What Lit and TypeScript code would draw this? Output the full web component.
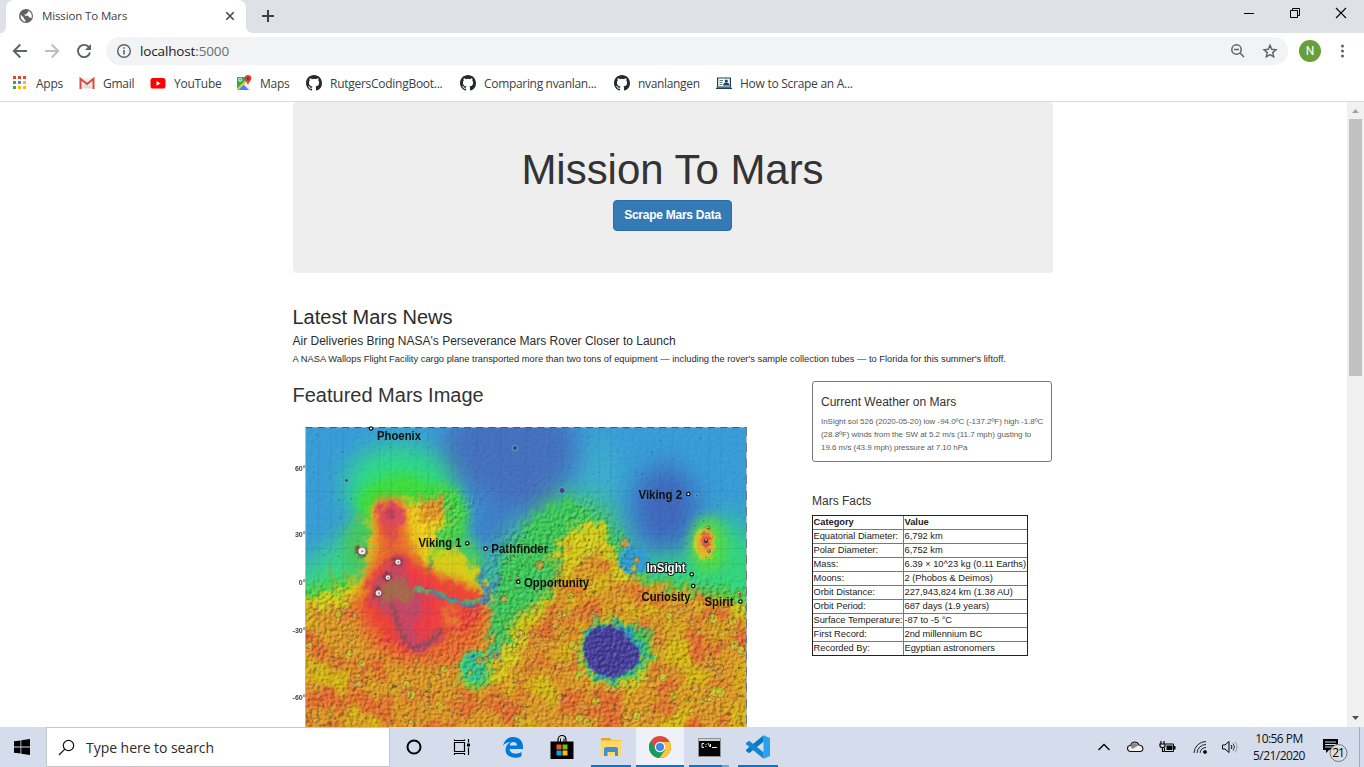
import { LitElement, html, css, svg } from "lit";
import { customElement } from "lit/decorators.js";

const facts: [string, string][] = [
  ["Equatorial Diameter:", "6,792 km"],
  ["Polar Diameter:", "6,752 km"],
  ["Mass:", "6.39 × 10^23 kg (0.11 Earths)"],
  ["Moons:", "2 (Phobos & Deimos)"],
  ["Orbit Distance:", "227,943,824 km (1.38 AU)"],
  ["Orbit Period:", "687 days (1.9 years)"],
  ["Surface Temperature:", "-87 to -5 °C"],
  ["First Record:", "2nd millennium BC"],
  ["Recorded By:", "Egyptian astronomers"],
];

@customElement("mars-map")
class MarsMap extends LitElement {
  static styles = css`
    :host { display: block; width: 468px; height: 315px; }
    svg { display: block; isolation: isolate; }
    .label { font: bold 13.4px "Liberation Sans", Arial, sans-serif; fill: #111; }
    .deg { font: bold 7px "Liberation Sans", Arial, sans-serif; fill: #444; text-anchor: end; }
    .halo { fill: #fff; stroke: #111; stroke-width: 2px; paint-order: stroke; }
    .shade { mix-blend-mode: hard-light; }
  `;

  // Seeded generator keeps the crater field identical on every render.
  craters() {
    let s = 7919;
    const rnd = () => (s = (s * 16807) % 2147483647) / 2147483647;
    const out = [];
    for (let i = 0; i < 900; i++) {
      const x = 306 + rnd() * 440;
      const y = 540 + rnd() * 187;
      const r = 0.5 + Math.pow(rnd(), 6) * 4.5;
      const k = rnd();
      if (y < 655 && x > 355 && x < 490) continue;
      if (y < 605 && (x < 355 || x > 640)) continue;
      if (Math.hypot(x - 612, y - 651) < 34) continue;
      out.push(svg`<circle cx=${x} cy=${y} r=${r} fill=${r > 1.7 ? (k > 0.5 ? "#c9d02c" : "#e39a30") : "#7d4a18"} fill-opacity=${r > 1.7 ? 0.7 : 0.45} stroke="#5f4319" stroke-opacity=".7" stroke-width=".6"></circle>
        <path d="M${x - r} ${y + r * 0.4}A${r} ${r} 0 0 0 ${x + r} ${y + r * 0.2}" fill="none" stroke="#f4e39a" stroke-opacity=".6" stroke-width=".5"></path>`);
    }
    for (let i = 0; i < 110; i++) {
      const x = 306 + rnd() * 440;
      const y = 430 + rnd() * 130;
      out.push(svg`<circle cx=${x} cy=${y} r=${0.4 + rnd() * 0.5} fill="#234f78" fill-opacity=".5"></circle>`);
    }
    return out;
  }

  render() {
    const peaks: [number, number, number][] = [[362, 551, 3.6], [398, 562, 2.6], [388, 577.5, 2.3], [378.5, 593, 2.8]];
    const sites: [number, number][] = [[371, 428.5], [467.3, 543.3], [485.5, 548.7], [518.3, 581.8], [688.3, 494], [691.7, 574.3], [693.2, 586], [740.5, 601.5]];
    return html`<svg width="468" height="315" viewBox="292 412 468 315">
      <defs>
        <clipPath id="frame"><rect x="305.5" y="427.5" width="441" height="300"></rect></clipPath>
        <filter id="soft" x="-30%" y="-30%" width="160%" height="160%" color-interpolation-filters="sRGB"><feGaussianBlur stdDeviation="12"></feGaussianBlur></filter>
        <filter id="mid" x="-30%" y="-30%" width="160%" height="160%" color-interpolation-filters="sRGB"><feGaussianBlur stdDeviation="6"></feGaussianBlur></filter>
        <filter id="rough" filterUnits="userSpaceOnUse" x="296" y="420" width="460" height="320" color-interpolation-filters="sRGB">
          <feGaussianBlur stdDeviation="3" result="b"></feGaussianBlur>
          <feTurbulence type="fractalNoise" baseFrequency=".11" numOctaves="4" seed="4" result="n"></feTurbulence>
          <feDisplacementMap in="b" in2="n" scale="22" xChannelSelector="R" yChannelSelector="G"></feDisplacementMap>
        </filter>
        <filter id="craggy" filterUnits="userSpaceOnUse" x="296" y="420" width="460" height="320" color-interpolation-filters="sRGB">
          <feGaussianBlur stdDeviation="1" result="b"></feGaussianBlur>
          <feTurbulence type="fractalNoise" baseFrequency=".2" numOctaves="3" seed="9" result="n"></feTurbulence>
          <feDisplacementMap in="b" in2="n" scale="8" xChannelSelector="R" yChannelSelector="G"></feDisplacementMap>
        </filter>
        <filter id="redpatch" filterUnits="userSpaceOnUse" x="305" y="427" width="442" height="300" color-interpolation-filters="sRGB">
          <feTurbulence type="fractalNoise" baseFrequency=".032" numOctaves="5" seed="12"></feTurbulence>
          <feColorMatrix values="0 0 0 0 .91  0 0 0 0 .36  0 0 0 0 .2  4.5 0 0 0 -2.1"></feColorMatrix>
        </filter>
        <filter id="yellowpatch" filterUnits="userSpaceOnUse" x="305" y="427" width="442" height="300" color-interpolation-filters="sRGB">
          <feTurbulence type="fractalNoise" baseFrequency=".03" numOctaves="5" seed="31"></feTurbulence>
          <feColorMatrix values="0 0 0 0 .84  0 0 0 0 .77  0 0 0 0 .06  0 4.5 0 0 -2.2"></feColorMatrix>
        </filter>
        <filter id="relief" filterUnits="userSpaceOnUse" x="305" y="427" width="442" height="300" color-interpolation-filters="sRGB">
          <feTurbulence type="fractalNoise" baseFrequency=".27" numOctaves="3" seed="3"></feTurbulence>
          <feColorMatrix values="0 0 0 0 0 0 0 0 0 0 0 0 0 0 0 1 0 0 0 0"></feColorMatrix>
          <feDiffuseLighting surfaceScale="1.900" diffuseConstant=".72" lighting-color="#fff"><feDistantLight azimuth="225" elevation="43"></feDistantLight></feDiffuseLighting>
        </filter>
        <mask id="south">
          <path filter="url(#mid)" fill="#fff" d="M290 608 L350 600 L365 640 L430 670 L480 690 L510 625 L550 590 L580 530 L600 545 L630 585 L690 590 L760 606 V745 H290Z"></path>
        </mask>
        <mask id="rugged">
          <rect x="300" y="420" width="450" height="310" fill="#fff" fill-opacity=".06"></rect>
          <path filter="url(#mid)" fill="#fff" fill-opacity=".38" d="M290 590 L350 580 L365 630 L430 655 L478 600 L490 545 L530 520 L590 495 L625 535 L640 580 L700 580 L760 590 V745 H290Z M405 510 L440 490 L478 500 L450 540 L430 540Z"></path>
        </mask>
      </defs>
      <g clip-path="url(#frame)">
        <rect x="305" y="427" width="442" height="301" fill="#389dd8"></rect>
        <g filter="url(#soft)">
          <ellipse cx="510" cy="450" rx="68" ry="50" fill="#4570bf"></ellipse>
          <ellipse cx="525" cy="490" rx="32" ry="25" fill="#4570bf"></ellipse>
          <ellipse cx="665" cy="508" rx="32" ry="42" fill="#3f68bd"></ellipse>
          <ellipse cx="490" cy="525" rx="18" ry="24" fill="#3e7cc6"></ellipse>
          <ellipse cx="400" cy="487" rx="56" ry="42" fill="#2fdc86"></ellipse>
          <ellipse cx="600" cy="480" rx="20" ry="45" fill="#3fb6c9" fill-opacity=".7"></ellipse>
          <path fill="#38d689" d="M290 575 L350 530 L390 560 L400 620 L290 625Z"></path>
          <path fill="#33d67d" d="M640 558 L690 555 L725 510 L765 555 V630 L650 605Z"></path>
          <path fill="#42cb6b" d="M488 640 L498 550 L560 490 L610 505 L630 550 L640 590 L540 660Z"></path>
        </g>
        <g filter="url(#mid)">
          <path fill="#3fdd3d" d="M355 502 Q365 478 405 472 Q430 482 460 492 Q475 520 460 545 L380 550Z"></path>
          <ellipse cx="359" cy="547" rx="15" ry="30" fill="#48c860"></ellipse>
          <path fill="#52d340" d="M296 590 L350 575 L370 600 L300 618Z"></path>
          <path fill="#46cb63" d="M440 535 L470 535 L486 560 L484 595 L440 585Z"></path>
          <ellipse cx="708" cy="545" rx="18" ry="28" fill="#57dc43"></ellipse>
        </g>
        <g filter="url(#rough)">
          <path fill="#3dcc59" d="M488 655 L494 605 L500 565 L517 540 L532 520 L552 507 L570 500 L592 515 L618 535 L625 565 L570 600 L535 625Z"></path>
          <path fill="#4bd548" d="M425 504 L448 482 L460 505 L463 528 L446 543 L432 583 L415 560Z"></path>
          <path fill="#58cb45" d="M610 543 L622 566 L648 576 L695 585 L760 596 V606 L640 590Z"></path>
          <path fill="#d8d017" d="M290 603 L340 591 L366 570 L373 505 L390 498 L440 503 L446 518 L429 558 L436 551 L458 549 L477 572 L489 595 L491 615 L480 660 L502 655 L520 620 L557 585 L565 560 L546 560 L575 526 L600 520 L615 555 L640 583 L692 593 L760 611 V745 H290Z"></path>
          <path fill="#f1d11b" d="M370 575 L371 510 L388 498 L440 503 L444 520 L428 557 L430 590Z"></path>
          <path fill="#df9a25" d="M290 614 L345 604 L367 590 L380 525 L408 530 L424 567 L441 575 L476 588 L488 606 L490 640 L478 690 L505 680 L522 646 L550 600 L585 555 L602 550 L617 580 L670 589 L710 604 L760 624 V745 H290Z"></path>
          <path fill="#e59526" d="M417 501 L437 498 L446 510 L436 525 L424 520Z"></path>
        </g>
        <path d="M432 556 L428 572 L429 580" fill="none" stroke="#48b64b" stroke-width="3" filter="url(#craggy)"></path>
        <g mask="url(#south)">
          <rect x="305" y="427" width="442" height="300" filter="url(#yellowpatch)" opacity=".75"></rect>
          <rect x="305" y="427" width="442" height="300" filter="url(#redpatch)" opacity=".7"></rect>
        </g>
        <g filter="url(#mid)">
          <path fill="#f08a25" d="M364 585 L376 550 L378 500 L402 500 L410 545 L425 575 L430 600 L365 600Z"></path>
          <path fill="#ed6a2e" d="M366 580 L379 553 L382 513 L397 512 L403 543 L419 570 L450 579 L480 592 L489 615 L475 650 L460 665 L402 665 L374 651 L350 610Z"></path>
        </g>
        <g filter="url(#rough)">
          <path fill="#ef4438" d="M371 580 L400 555 L425 574 L452 583 L477 592 L484 610 L470 628 L440 636 L425 650 L402 650 L383 638 L364 610Z"></path>
          <path fill="#ee7a30" d="M440 605 L458 608 L455 625 L442 628Z"></path>
        </g>
        <g filter="url(#mid)">
          <path fill="#f13b46" d="M370 578 L400 555 L435 582 L442 620 L420 645 L395 620Z"></path>
          <ellipse cx="390" cy="520" rx="11" ry="18" fill="#ee4e3e"></ellipse>
        </g>
        <g filter="url(#rough)">
          <ellipse cx="391" cy="514" rx="14" ry="12" fill="#dc4760"></ellipse>
          <path fill="#dc4a52" d="M388 520 L396 520 L394 548 L389 548Z"></path>
          <path fill="#c54766" d="M371 586 L403 552 L405 575 L425 590 L425 610 L412 620 L418 641 L442 632 L448 637 L418 655 L402 640 L393 615 L372 604Z"></path>
          <path fill="#a66a4c" d="M380 585 L393 575 L420 590 L409 604 L399 602 L382 602Z"></path>
        </g>
        <circle cx="389.500" cy="513" r="4.500" fill="#a93d58" fill-opacity=".6" filter="url(#craggy)"></circle>
        <path filter="url(#craggy)" d="M392 603 Q397 625 404 638 Q412 650 418 647 Q434 643 442 629" fill="none" stroke="#984a58" stroke-width="4"></path>
        <g filter="url(#craggy)" fill="none">
          <path d="M414 589 L434 592 L448 599 L462 603 L480 600" stroke="#4bbb74" stroke-width="4"></path>
          <path d="M430 590 L441 597 L454 599 L464 604 L477 606" stroke="#337fbd" stroke-width="2.3"></path>
          <path d="M485 595 L480 578 L484 568 M485 591 L494 585 L502 575 M480 603 L490 596" stroke="#4086c2" stroke-width="4"></path>
          <path d="M489 550 L485 565 L492 583" stroke="#3ab4a4" stroke-width="3"></path>
          <path d="M355 520 Q360 512 366 518 M330 565 Q330 578 336 585 M344 570 Q350 582 354 583" stroke="#a8a838" stroke-width="1.600"></path>
        </g>
        <ellipse cx="634" cy="560" rx="15" ry="14" fill="#2f9fd4" filter="url(#craggy)"></ellipse>
        <g filter="url(#rough)">
          <ellipse cx="615" cy="654" rx="39" ry="35" fill="#c7d323"></ellipse>
          <path fill="#3ac65a" d="M582 642 L594 621 L613 619 L628 624 L650 630 L652 653 L640 672 L617 684 L594 678 L581 663Z"></path>
          <path fill="#2d9ebe" d="M585 645 L595 627 L618 623 L635 636 L646 656 L633 671 L608 681 L588 669Z"></path>
        </g>
        <path filter="url(#craggy)" fill="#4840a0" d="M584 642 L593 628 L613 625 L629 637 L641 655 L633 669 L612 679 L592 671 L584 658Z"></path>
        <path filter="url(#craggy)" fill="none" stroke="#332f69" stroke-opacity=".7" d="M590 649 Q600 633 615 638 M595 657 Q609 637 621 652 M598 666 Q602 643 607 668 M615 660 Q620 665 627 655"></path>
        <g filter="url(#craggy)">
          <ellipse cx="476" cy="670" rx="17" ry="20" fill="#7acc45"></ellipse>
          <ellipse cx="475" cy="667" rx="13" ry="16" fill="#31ca89"></ellipse>
          <circle cx="472" cy="657" r="3" fill="#318ec1"></circle>
          <path d="M458 665h-4M461 680l-5 4M476 688v6M488 682l6 4M493 670h5M486 654l4-5M466 654l-4-5" stroke="#6fb93e" stroke-width="2"></path>
        </g>
        <g filter="url(#craggy)">
          <ellipse cx="704" cy="544" rx="11" ry="16" fill="#b8d630"></ellipse>
          <ellipse cx="705" cy="543" rx="8.500" ry="13" fill="#e9b12d"></ellipse>
          <ellipse cx="706" cy="541" rx="5" ry="8" fill="#df563f"></ellipse>
        </g>
        <circle cx="706" cy="541" r="2" fill="#4b202d"></circle><circle cx="706" cy="540" r=".8" fill="#fff"></circle>
        ${[[708.5, 528], [709, 551], [739, 593]].map(([x, y]) => svg`<circle cx=${x} cy=${y} r="2" fill="#b84a42"></circle><circle cx=${x - 0.4} cy=${y - 0.5} r=".8" fill="#eed0b0"></circle>`)}
        ${[[515, 448, 2.7], [562, 490.5, 3], [346.5, 480.5, 2], [696.7, 495.5, 1.5]].map(([x, y, r]) => svg`<circle cx=${x} cy=${y} r=${r} fill="#3e4590" stroke="#6dc8c5" stroke-width=".7"></circle>`)}
        ${this.craters()}
        ${peaks.map(([x, y, r]) => svg`<circle cx=${x - 0.8} cy=${y} r=${r + 2.2} fill="#7c3742" fill-opacity=".8" filter="url(#craggy)"></circle><circle cx=${x} cy=${y} r=${r} fill="#eee"></circle><circle cx=${x + 0.4} cy=${y + 0.3} r="1" fill="#817e76"></circle>`)}
        <path d="M318.5 427V727M331 427V727M343 427V727M379.5 427V727M391 427V727M416 427V727M428 427V727M452.5 427V727M477 427V727M501 427V727M526 427V727M550 427V727M562 427V727M599 427V727M611 427V727M660 427V727M672 427V727M709 427V727M721 427V727M306 491.5H747M306 534H747M306 548.5H747M306 564H747M306 612.5H747M306 630H747M306 668H747" stroke="#27465a" stroke-opacity=".15" stroke-width=".7"></path>
      </g>
      <g class="shade" mask="url(#rugged)"><rect x="306" y="428" width="440" height="299" filter="url(#relief)"></rect></g>
      <path d="M305.5 427.5H746.5" stroke="#aaa"></path><path d="M305.5 427.5H746.5" stroke="#4b5860" stroke-dasharray="7 5.2"></path>
      <path d="M305.5 427V727M746.5 427V727" stroke="#bbb" stroke-width=".8"></path><path d="M746.5 427V727" stroke="#6e7f83" stroke-dasharray="9 7"></path>
      ${[["60°", 470.5], ["30°", 537], ["0°", 585], ["-30°", 633], ["-60°", 700]].map(([t, y]) => svg`<text class="deg" x="305.500" y=${y}>${t}</text>`)}
      ${sites.map(([x, y]) => svg`<circle cx=${x} cy=${y} r="1.700" fill="#fff" stroke="#111" stroke-width="1.300"></circle>`)}
      <g class="label">
        ${([["Phoenix", 377, 440, 44], ["Viking 1", 418.5, 547, 43], ["Pathfinder", 491.2, 553, 57], ["Opportunity", 524, 586.7, 65], ["Viking 2", 638.5, 498.5, 43.5], ["Curiosity", 641.5, 600.5, 49], ["Spirit", 704.5, 606, 29]] as [string, number, number, number][]).map(([t, x, y, w]) => svg`<text x=${x} y=${y} textLength=${w} lengthAdjust="spacingAndGlyphs">${t}</text>`)}
        <text class="halo" x="646.5" y="571.5" textLength="39" lengthAdjust="spacingAndGlyphs">InSight</text>
      </g>
    </svg>`;
  }
}

const github = html`<svg width="16" height="16" viewBox="0 0 16 16"><path fill="#24292e" d="M8 0C3.58 0 0 3.58 0 8c0 3.54 2.29 6.53 5.47 7.59.4.07.55-.17.55-.38 0-.19-.01-.82-.01-1.49-2.01.37-2.53-.49-2.69-.94-.09-.23-.48-.94-.82-1.13-.28-.15-.68-.52-.01-.53.63-.01 1.08.58 1.23.82.72 1.21 1.87.87 2.33.66.07-.52.28-.87.51-1.07-1.78-.2-3.64-.89-3.64-3.95 0-.87.31-1.59.82-2.15-.08-.2-.36-1.02.08-2.12 0 0 .67-.21 2.2.82a7.7 7.7 0 0 1 4 0c1.53-1.04 2.2-.82 2.2-.82.44 1.1.16 1.92.08 2.12.51.56.82 1.27.82 2.15 0 3.07-1.87 3.75-3.65 3.95.29.25.54.73.54 1.48 0 1.07-.01 1.93-.01 2.2 0 .21.15.46.55.38A8.01 8.01 0 0 0 16 8c0-4.42-3.58-8-8-8z"></path></svg>`;

const apps = html`<svg width="16" height="16" viewBox="0 0 16 16">${[["#ea4335", "#ea4335", "#ea4335"], ["#34a853", "#4285f4", "#fbbc05"], ["#34a853", "#fbbc05", "#fbbc05"]].map((r, j) => r.map((c, i) => svg`<rect x=${2 + i * 5} y=${1 + j * 5} width="3" height="3" fill=${c}></rect>`))}</svg>`;
const gmail = html`<svg width="16" height="16" viewBox="0 0 16 16"><path fill="#eee" d="M1 3h14v11H1z"></path><path fill="#dcdcdc" d="M3 13l5-5 5 5z"></path><path fill="none" stroke="#d54b3d" stroke-width="2" d="M1.500 14V3.800L8 9l6.500-5.200V14"></path></svg>`;
const youtube = html`<svg width="16" height="16" viewBox="0 0 16 16"><rect x=".5" y="3" width="15" height="10.500" rx="2.600" fill="#f00"></rect><path d="M6.500 6v4.800l4-2.400z" fill="#fff"></path></svg>`;
const maps = html`<svg width="16" height="16" viewBox="0 0 16 16"><rect x="1" y="2" width="13" height="13" rx="1" fill="#34a853"></rect><path d="M1 15L14 3v11a1 1 0 0 1-1 1z" fill="#eee"></path><path d="M2 15l5.500-5.500L13 15z" fill="#4285f4"></path><path d="M1.500 14.500L12 4" stroke="#fbc02d" stroke-width="2"></path><circle cx="4.200" cy="4.800" r="1.500" fill="none" stroke="#fff"></circle><path d="M12 0a3.400 3.400 0 0 0-3.400 3.400C8.600 6 12 7 12 10.500c0-3.500 3.400-4.500 3.400-7.100A3.400 3.400 0 0 0 12 0z" fill="#db4437"></path><circle cx="12" cy="3.400" r="1.200" fill="#7b231c"></circle></svg>`;
const scrape = html`<svg width="16" height="16" viewBox="0 0 16 16"><path fill="none" stroke="#1d4257" stroke-width="1.200" d="M1.600 3h12.800v9H1.600zM0 13.400h16"></path><path d="M3.500 5.500h3.500M3.500 7.500h3M3.500 9.500h2.500" stroke="#5b7685"></path><circle cx="10.300" cy="6" r="1.600" fill="#1d4257"></circle><path d="M7 10.500c0-4 6.500-4 6.500 0z" fill="#1d4257"></path></svg>`;

const bookmarks: [unknown, string, string][] = [
  [apps, "Apps", "b1"], [gmail, "Gmail", "b2"], [youtube, "YouTube", "b3"], [maps, "Maps", "b4"],
  [github, "RutgersCodingBoot...", "b5"], [github, "Comparing nvanlan...", "b6"], [github, "nvanlangen", "b7"], [scrape, "How to Scrape an A...", "b8"],
];

@customElement("browser-chrome")
class BrowserChrome extends LitElement {
  static styles = css`
    :host { display: block; height: 102px; font: 12px "Open Sans", "Noto Sans", sans-serif; color: #3c4043; background: #fff; box-sizing: border-box; border-bottom: 1px solid #d9dadc; }
    svg { display: block; flex: none; }
    .strip { height: 33px; background: #dee1e6; display: flex; align-items: flex-start; }
    .edge { align-self: flex-end; }
    .tab { width: 240px; height: 33px; background: #fff; border-radius: 8px 8px 0 0; display: flex; align-items: center; box-sizing: border-box; padding: 0 9px 2px 12px; }
    .title { flex: 1; margin-left: 8px; font-size: 11.5px; letter-spacing: -.13px; }
    .plus { margin: 9px 0 0 7px; }
    .controls { margin: 7px 17px 0 auto; display: flex; gap: 34px; }
    .bar { height: 36px; display: flex; align-items: center; padding: 0 14px 0 12px; }
    .nav { display: flex; gap: 16px; margin-right: 14px; }
    .omni { flex: 1; height: 28px; border-radius: 14px; background: #f1f3f4; display: flex; align-items: center; padding: 0 10px; }
    .url { flex: 1; margin-left: 8px; color: #202124; font-size: 13.5px; letter-spacing: -.14px; padding-bottom: 1px; }
    .port { color: #6b6f73; }
    .zoom { margin-right: 16px; }
    .avatar { width: 22px; height: 22px; border-radius: 50%; background: #689f38; color: #fff; display: flex; align-items: center; justify-content: center; margin: 0 13px 0 11px; font: 12px Roboto, sans-serif; }
    .marks { height: 28px; display: flex; align-items: center; }
    .mark { display: flex; align-items: center; gap: 8px; white-space: nowrap; font-size: 12px; letter-spacing: -.27px; box-sizing: border-box; flex: none; }
    .b1 { width: 68px; margin-left: 11px; gap: 9px; } .b2 { width: 71px; } .b3 { width: 86px; } .b4 { width: 70px; }
    .b5 { width: 154px; } .b6 { width: 154px; letter-spacing: -.32px; } .b7 { width: 102px; letter-spacing: -.34px; } .b8 { width: 150px; }
  `;
  render() {
    return html`
      <div class="strip">
        <svg class="edge" width="6" height="8"><path d="M0 8C4 8 6 6 6 0V8z" fill="#fff"></path></svg>
        <div class="tab">
          <svg width="16" height="16" viewBox="0 0 16 16"><circle cx="8" cy="8" r="7" fill="#5f6368"></circle><path d="M2.600 6.500l3.200 3.200.4 1.500 1.300.9v1.500C4.500 13.300 2.200 11 2.600 6.500zM10.300 2.800l-.1 1.700-1.500.8-.4 1.100-2.200.2 1 1.200 3-.1 1.300 1.900 1.500.1.500.8c1.300-3.300-.4-6.500-3.100-7.700z" fill="#fff"></path></svg>
          <span class="title">Mission To Mars</span>
          <svg width="14" height="14"><path d="M3.300 3.300l7.400 7.400M10.700 3.300l-7.400 7.400" stroke="#45494d" stroke-width="1.600"></path></svg>
        </div>
        <svg class="edge" width="8" height="8"><path d="M8 8C3 8 0 6 0 0V8z" fill="#fff"></path></svg>
        <svg class="plus" width="14" height="14"><path d="M7 1v12M1 7h12" stroke="#3c4043" stroke-width="2"></path></svg>
        <div class="controls">
          <svg width="12" height="12"><path d="M1 6.500h10" stroke="#000"></path></svg>
          <svg width="12" height="12"><path d="M1.500 3.500h7v7h-7zM3.500 3.500v-2h7v7h-2" fill="none" stroke="#000"></path></svg>
          <svg width="12" height="12"><path d="M1 1l10 10M11 1L1 11" stroke="#000" stroke-width="1.100"></path></svg>
        </div>
      </div>
      <div class="bar">
        <div class="nav">
          <svg width="16" height="16"><path d="M15 8H2M8.300 1.500L1.800 8l6.500 6.500" fill="none" stroke="#5f6368" stroke-width="1.900"></path></svg>
          <svg width="16" height="16"><path d="M1 8h13M7.700 1.500L14.200 8l-6.500 6.500" fill="none" stroke="#bdbec0" stroke-width="1.900"></path></svg>
          <svg width="16" height="16"><path d="M13.300 4.800A6.100 6.100 0 1 0 14 9.500" fill="none" stroke="#5f6368" stroke-width="1.900"></path><path d="M15 1v6H9z" fill="#5f6368"></path></svg>
        </div>
        <div class="omni">
          <svg width="16" height="16"><circle cx="8" cy="8" r="6.300" fill="none" stroke="#5f6368" stroke-width="1.500"></circle><path d="M8 7v4.500M8 4.200v1.600" stroke="#5f6368" stroke-width="1.600"></path></svg>
          <span class="url">localhost<span class="port">:5000</span></span>
          <svg class="zoom" width="16" height="16"><circle cx="6.500" cy="6.500" r="4.700" fill="none" stroke="#5f6368" stroke-width="1.500"></circle><path d="M10 10l4 4M4 6.500h5" stroke="#5f6368" stroke-width="1.500"></path></svg>
          <svg width="16" height="16"><path d="M8 2.300l1.700 4 4.300.4-3.300 2.900 1 4.200L8 11.600l-3.700 2.200 1-4.200L2 6.700l4.300-.4z" fill="none" stroke="#5f6368" stroke-width="1.400"></path></svg>
        </div>
        <div class="avatar">N</div>
        <svg width="16" height="16"><circle cx="8.500" cy="3" r="1.500" fill="#5f6368"></circle><circle cx="8.500" cy="8" r="1.500" fill="#5f6368"></circle><circle cx="8.500" cy="13" r="1.500" fill="#5f6368"></circle></svg>
      </div>
      <div class="marks">${bookmarks.map(([icon, t, c]) => html`<div class="mark ${c}">${icon}<span>${t}</span></div>`)}</div>`;
  }
}

@customElement("task-bar")
class TaskBar extends LitElement {
  static styles = css`
    :host { display: flex; height: 40px; background: #d5dceb; font-family: "Open Sans", "Noto Sans", sans-serif; color: #111; align-items: stretch; }
    svg { display: block; flex: none; }
    .start { width: 46px; display: flex; align-items: center; justify-content: center; padding-right: 3px; box-sizing: border-box; }
    .search { width: 344px; box-sizing: border-box; border: 1px solid #c4c6ca; background: #fff; display: flex; align-items: center; padding-left: 11px; gap: 11px; font-size: 14px; letter-spacing: -.04px; color: #2b2b2b; }
    .item { width: 49px; display: flex; align-items: center; justify-content: center; box-sizing: border-box; }
    .cortana { width: 48px; } .view { width: 47px; } .edge { width: 55px; } .store { width: 43px; margin-right: -1px; }
    .run { width: 40px; border-bottom: 2px solid #0078d7; border-top: 2px solid transparent; margin-left: 9px; }
    .active { width: 48px; margin-left: 5px; background: #eef1f8; border-top-color: #eef1f8; }
    .cmd { margin-left: 5px; border-image: linear-gradient(90deg, #0078d7 80%, #69a9de 80%) 1; border-top: 0; padding-top: 2px; }
    .tray { margin-left: auto; display: flex; align-items: center; }
    .t1 { margin-right: 16px; } .t2 { margin-right: 15px; } .t3 { margin-right: 17px; } .t4 { margin-right: 14px; } .t5 { margin-right: 12px; }
    .clock { font-size: 12px; line-height: 17.500px; text-align: center; width: 56px; white-space: nowrap; letter-spacing: -.55px; display: flex; flex-direction: column; align-items: center; }
    .note { margin: 0 10px 0 15px; } .badge { font: 12px "Open Sans", sans-serif; }
    .peek { width: 5px; border-left: 1px solid #a5acb8; height: 40px; box-sizing: border-box; }
  `;
  render() {
    return html`
      <div class="start"><svg width="16" height="16"><path d="M0 2.300L6.500 1.400v6.100H0zM7.300 1.300L16 0v7.500H7.300zM0 8.400h6.500v6.200L0 13.700zM7.300 8.400H16V16l-8.700-1.300z"></path></svg></div>
      <div class="search"><svg width="17" height="17"><circle cx="10.500" cy="6.500" r="5.200" fill="none" stroke="#111" stroke-width="1.200"></circle><path d="M6.800 10.200L1 16" stroke="#111" stroke-width="1.200"></path></svg>Type here to search</div>
      <div class="item cortana"><svg width="18" height="18"><circle cx="9" cy="9" r="6.500" fill="none" stroke="#000" stroke-width="2"></circle></svg></div>
      <div class="item view"><svg width="18" height="18" fill="none" stroke="#000" stroke-width="1.200"><path d="M1.500 4.500h10v9h-10zM1.500 1.500v1h10v-1M1.500 17v-1.500h10V17M15.500 1v3.500M15.500 9.500V17"></path><path d="M14 5.500h3v3h-3z" fill="#000" stroke="none"></path></svg></div>
      <div class="item edge"><svg width="22" height="22" viewBox="0 0 22 22"><path d="M1 10C2 4 6 1 11 1c6 0 10 4 10 9.500V13H7.500c.3 5 7.500 6 12 3v4.200C12 24 3.500 20.500 3.500 13.700c0-3.300 2-6.200 5-7.500C4.500 6.200 2.300 7.800 1 10zM7.700 9.400h7.400c-.2-4.400-6.900-4.700-7.400 0z" fill="#0078d7"></path></svg></div>
      <div class="item store"><svg width="24" height="27"><path d="M.5 7.500h23V25H.5z"></path><path d="M8 8V6c0-6 8-6 8 0v2" fill="none" stroke="#000" stroke-width="1.200"></path><path d="M10.500 8V4.500M14 4.500V8" stroke="#000"></path><path d="M6.500 10.500h5v5h-5z" fill="#f35325"></path><path d="M12.500 10.500h5v5h-5z" fill="#81bc06"></path><path d="M6.500 16.500h5v5h-5z" fill="#05a6f0"></path><path d="M12.500 16.500h5v5h-5z" fill="#ffba08"></path></svg></div>
      <div class="item run"><svg width="22" height="20"><path d="M1 1h9l1.500 2H21v14H1z" fill="#e8a51c"></path><path d="M.5 3.500h21V18H.5z" fill="#ffd968"></path><path d="M4 19v-7a2 2 0 0 1 2-2h10a2 2 0 0 1 2 2v7h-3v-4H7.500v4z" fill="#3b91d6"></path></svg></div>
      <div class="item run active"><svg width="22" height="22" viewBox="0 0 22 22"><circle cx="11" cy="11" r="11" fill="#dd4b3e"></circle><path d="M1.500 5.500A11 11 0 0 0 10.500 22L16 14l-9-1z" fill="#149c5a"></path><path d="M10.500 22A11 11 0 0 0 20.800 6H11l5 8z" fill="#fcc934"></path><circle cx="11" cy="11" r="5.200" fill="#fff"></circle><circle cx="11" cy="11" r="4" fill="#4285f4"></circle></svg></div>
      <div class="item run cmd"><svg width="23" height="19"><path d="M.5.500h22v18H.5z" fill="#050505" stroke="#8d9297"></path><path d="M1 1h21v2H1z" fill="#ccd0d3"></path><path d="M6 5.500H4v4h2M8 6v1M8 8v1M10 5l2 4M14 9.500h5M12.500 6v3" stroke="#eee" fill="none"></path></svg></div>
      <div class="item run"><svg width="24" height="24" viewBox="0 0 24 24"><path d="M17.500.3L24 3v18l-6.500 2.700z" fill="#2ba1ec"></path><path d="M17.500.3v6.500L3.200 18.200 0 16v-1.200z" fill="#0879c5"></path><path d="M17.500 23.700v-6.500L3.200 5.800 0 8v1.200z" fill="#1587d2"></path></svg></div>
      <div class="tray">
        <svg class="t1" width="14" height="14"><path d="M1.500 10L7 4.500l5.500 5.500" fill="none" stroke="#000" stroke-width="1.300"></path></svg>
        <svg class="t2" width="17" height="14"><path d="M3.500 11.500a3 3 0 0 1 0-6C5 1 10 1 12 5c5 .5 5 6.500 1 6.500z" fill="#f3f3f1" stroke="#111" stroke-width="1.100"></path><path d="M3.500 6C5 2 10 2 11.500 5.500L5 9z" fill="#8a8a88"></path></svg>
        <svg class="t3" width="17" height="14"><path d="M2 1v3M5 1v3M1 4h5v2c0 2-5 2-5 0zM3.500 7v4.500H5" fill="none" stroke="#000" stroke-width="1.200"></path><path d="M6.500 4h8v7.500h-9V8" fill="none" stroke="#000"></path><path d="M7.500 5.500h6V10h-6zM15 6h1.500v3.500H15z"></path></svg>
        <svg class="t4" width="14" height="14" fill="none" stroke="#222"><path d="M1 13A12 12 0 0 1 13 1.500M4 13a9 9 0 0 1 9-8.500M7 13a6 6 0 0 1 6-5.500"></path><circle cx="12" cy="12" r="1.500" fill="#000"></circle></svg>
        <svg class="t5" width="18" height="14" fill="none" stroke="#000"><path d="M1.500 5v4H4l4 3.500v-11L4 5zM10 5q2 2 0 4"></path><path d="M12 3.500q3 3.500 0 7" stroke="#333"></path><path d="M14 1.500q4 5.500 0 11" stroke="#999"></path></svg>
        <div class="clock"><span>10:56 PM</span><span>5/21/2020</span></div>
        <svg class="note" width="27" height="30"><path d="M1 7h15v11H7l-3 3v-3H1z"></path><path d="M3 10h11M3 12.500h11M3 15h9" stroke="#d5dceb"></path><circle cx="16.500" cy="21" r="8.500" fill="#dcdddf" stroke="#777"></circle><text class="badge" x="10.300" y="25.300" textLength="12.500">21</text></svg>
        <div class="peek"></div>
      </div>`;
  }
}

@customElement("app-root")
class AppRoot extends LitElement {
  static styles = css`
    :host { display: flex; flex-direction: column; width: 1364px; height: 767px; overflow: hidden; background: #fff; font-family: "Liberation Sans", Arial, sans-serif; color: #333; }
    browser-chrome, task-bar { flex: none; }
    .view { flex: 1; min-height: 0; display: flex; overflow: hidden; }
    .page { flex: 1; overflow: hidden; }
    .container { width: 760px; margin-left: 292.5px; }
    .jumbo { height: 171px; box-sizing: border-box; padding-top: 45px; background: #eee; border-radius: 4px; display: flex; flex-direction: column; align-items: center; }
    h1, h2, h4, p { margin: 0; font-weight: 400; white-space: nowrap; }
    h1 { font-size: 42px; line-height: 46px; letter-spacing: -.03px; }
    h2 { font-size: 20px; line-height: 22px; }
    h4 { font-size: 12px; line-height: 14px; }
    button { margin-top: 7px; width: 119px; height: 31px; box-sizing: border-box; border: 1px solid #2e6da4; border-radius: 4px; background: #337ab7; color: #fff; font: bold 12px "Liberation Sans", Arial, sans-serif; letter-spacing: -.25px; padding: 0 0 1px; }
    .news { padding-top: 33px; color: #2b2b2b; }
    .news h4 { margin-top: 6px; }
    .news p { margin-top: 4px; font-size: 9.33px; line-height: 14px; }
    .row { display: flex; margin-top: 15px; }
    .left { width: 519.5px; padding-top: 3px; }
    .left mars-map { margin: 6px 0 0 -.5px; }
    .right { width: 240px; }
    .weather { height: 81px; box-sizing: border-box; border: 1px solid #777; border-radius: 3px; padding: 13px 8px 0; }
    .weather p { margin-top: 6px; font-size: 8px; line-height: 13px; color: #5c5c5c; letter-spacing: -.04px; }
    .facts { margin: 32px 0 7px; }
    .frame { width: 216px; box-sizing: border-box; border: 1px solid #222; color: #222; }
    table { border-collapse: collapse; width: 214px; font-size: 9.33px; table-layout: fixed; }
    .key { width: 89.5px; }
    td, th { border: 1px solid #777; padding: 0 0 0 .5px; height: 13px; line-height: 13px; text-align: left; white-space: nowrap; box-sizing: content-box; letter-spacing: -.02px; }
    tr > :first-child { border-left: 0; } tr > :last-child { border-right: 0; }
    th { border-top: 0; } tbody tr:last-child td { border-bottom: 0; }
    .scroll { width: 17px; background: #f1f1f1; display: flex; flex-direction: column; align-items: center; flex: none; }
    .thumb { width: 13px; height: 257px; background: #c1c1c1; }
    .scroll svg { display: block; }
    .down { margin-top: auto; }
  `;
  render() {
    return html`
      <browser-chrome></browser-chrome>
      <div class="view">
        <div class="page"><div class="container">
          <div class="jumbo"><h1>Mission To Mars</h1><button>Scrape Mars Data</button></div>
          <div class="news">
            <h2>Latest Mars News</h2>
            <h4>Air Deliveries Bring NASA's Perseverance Mars Rover Closer to Launch</h4>
            <p>A NASA Wallops Flight Facility cargo plane transported more than two tons of equipment — including the rover's sample collection tubes — to Florida for this summer's liftoff.</p>
          </div>
          <div class="row">
            <div class="left"><h2>Featured Mars Image</h2><mars-map></mars-map></div>
            <div class="right">
              <div class="weather"><h4>Current Weather on Mars</h4>
                <p>InSight sol 526 (2020-05-20) low -94.0ºC (-137.2ºF) high -1.8ºC<br>(28.8ºF) winds from the SW at 5.2 m/s (11.7 mph) gusting to<br>19.6 m/s (43.9 mph) pressure at 7.10 hPa</p></div>
              <h4 class="facts">Mars Facts</h4>
              <div class="frame"><table><thead><tr><th class="key">Category</th><th>Value</th></tr></thead>
                <tbody>${facts.map(([k, v]) => html`<tr><td>${k}</td><td>${v}</td></tr>`)}</tbody></table></div>
            </div>
          </div>
        </div></div>
        <div class="scroll"><svg width="17" height="17"><path d="M5 11h7L8.500 7z" fill="#a3a3a3"></path></svg><div class="thumb"></div><svg class="down" width="17" height="17"><path d="M5 6h7l-3.500 4z" fill="#505050"></path></svg></div>
      </div>
      <task-bar></task-bar>`;
  }
}
